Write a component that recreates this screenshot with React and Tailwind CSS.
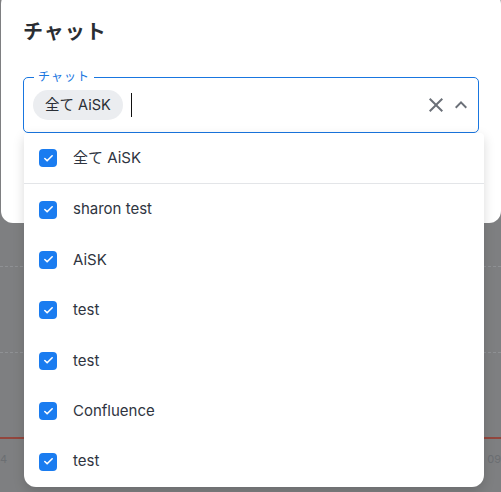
import { Check } from "lucide-react";

const options = ["sharon test", "AiSK", "test", "test", "Confluence", "test"];

function Box() {
  return (
    <span className="flex h-[18px] w-[18px] shrink-0 items-center justify-center rounded-[4px] bg-[#1a7cf0]">
      <Check size={11} strokeWidth={3.5} className="text-white" />
    </span>
  );
}

function Row({ label }) {
  return (
    <div className="flex h-[50.4px] items-center gap-4 pl-[15px] text-[15px] text-[#2f3541]">
      <Box />
      <span>{label}</span>
    </div>
  );
}

export default function App() {
  return (
    <div
      className="relative h-[492px] w-[501px] overflow-hidden bg-[#7e7f81]"
      style={{ fontFamily: "Inter, 'Noto Sans CJK JP', sans-serif" }}
    >
      {/* chart behind the backdrop */}
      <div className="flex flex-col pt-[266px]">
        <div className="border-t border-dashed border-[#8f9194]" />
        <div className="mt-[85px] border-t border-dashed border-[#8f9194]" />
        <div className="mt-[84px] h-[2px] bg-[#93463d]" />
        <div className="mt-[12px] flex justify-between text-[11px] text-[#6b6e72]">
          <span>4</span>
          <span>09</span>
        </div>
      </div>

      {/* dialog */}
      <div className="absolute left-[1px] top-[-8px] h-[231px] w-[500px] rounded-xl bg-white px-[22px] pt-[26px]">
        <h2 className="text-[20px] font-bold leading-[28px] tracking-[1px] text-[#2a2e33]">チャット</h2>
        <div className="relative mt-[31px] flex h-[56px] items-center rounded-[5px] border-[1.5px] border-[#1976e0] pl-[9px] pr-[5px]">
          <span className="absolute left-[10px] top-[-9px] bg-white px-[4px] text-[12px] leading-[16px] tracking-[1px] text-[#1976e0]">
            チャット
          </span>
          <span className="flex h-[30px] items-center rounded-full bg-[#ebedf0] px-[12px] text-[14.5px] text-[#2a2f36]">
            全て AiSK
          </span>
          <span className="ml-[8px] h-[24px] w-[1.5px] bg-[#111]" />
          <div className="ml-auto flex items-center gap-[1px] text-[#6b7078]">
            <svg width="24" height="24" viewBox="0 0 24 24" fill="currentColor">
              <path d="M19 6.41 17.59 5 12 10.59 6.41 5 5 6.41 10.59 12 5 17.59 6.41 19 12 13.41 17.59 19 19 17.59 13.41 12z" />
            </svg>
            <svg width="24" height="24" viewBox="0 0 24 24" fill="currentColor">
              <path d="M12 8l-6 6 1.41 1.41L12 10.83l4.59 4.58L18 14z" />
            </svg>
          </div>
        </div>
      </div>

      {/* listbox */}
      <div className="absolute left-[24px] top-[133px] w-[460px] rounded-b-xl rounded-t-[4px] bg-white shadow-[0_4px_12px_rgba(0,0,0,0.15)]">
        <Row label="全て AiSK" />
        <div className="h-px bg-[#e3e5e8]" />
        {options.map((o, i) => (
          <Row key={i} label={o} />
        ))}
      </div>
    </div>
  );
}
